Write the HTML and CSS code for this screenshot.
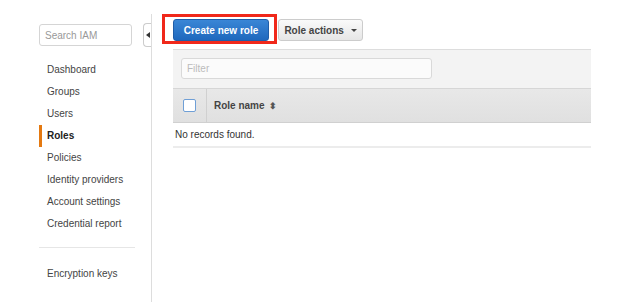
FILE: index.html
```html
<!DOCTYPE html>
<html lang="en">
<head>
    <meta charset="UTF-8">
    <title>IAM Roles</title>
    <link rel="stylesheet" href="styles.css">
</head>
<body>
    <div class="page">
        <div class="sidebar">
            <input type="text" class="search" placeholder="Search IAM">
            <div class="collapse-tab">
                <svg width="4" height="6" viewBox="0 0 4 6"><path d="M4 0 L0 3 L4 6 Z" fill="#333"/></svg>
            </div>
            <ul class="nav">
                <li>Dashboard</li>
                <li>Groups</li>
                <li>Users</li>
                <li class="active">Roles</li>
                <li>Policies</li>
                <li>Identity providers</li>
                <li>Account settings</li>
                <li>Credential report</li>
            </ul>
            <div class="nav-sep"></div>
            <ul class="nav nav-extra">
                <li>Encryption keys</li>
            </ul>
        </div>

        <div class="main">
            <div class="toolbar">
                <div class="highlight">
                    <button type="button" class="btn-primary">Create new role</button>
                </div>
                <button type="button" class="btn-default">Role actions <span class="caret"></span></button>
            </div>

            <div class="panel">
                <div class="filter-bar">
                    <input type="text" class="filter" placeholder="Filter">
                </div>
                <div class="table-head">
                    <div class="col-check"><span class="checkbox"></span></div>
                    <div class="col-name">Role name <span class="sort">&#x2B0D;</span></div>
                </div>
                <div class="table-empty">No records found.</div>
            </div>
        </div>
    </div>
</body>
</html>
```

FILE: styles.css
```css
body {
    margin: 0;
    font-family: "Liberation Sans", Arial, sans-serif;
    font-size: 10px;
    color: #333;
    background: #fff;
}
.page {
    display: flex;
    height: 303px;
}
.sidebar {
    position: relative;
    width: 112px;
    margin-top: 14px;
    padding: 10px 0 0 39px;
    border-right: 1px solid #ddd;
    height: 278px;
}
.search {
    display: block;
    box-sizing: border-box;
    width: 93px;
    height: 22px;
    padding: 0 5px;
    border: 1px solid #d5d5d5;
    border-radius: 3px;
    font-family: inherit;
    font-size: 10px;
}
.search::placeholder {
    color: #999;
}
.collapse-tab {
    position: absolute;
    left: 143px;
    top: 9px;
    width: 8px;
    height: 24px;
    box-sizing: border-box;
    border: 1px solid #ccc;
    border-right: none;
    border-radius: 4px 0 0 4px;
    background: #fff;
    display: flex;
    align-items: center;
    justify-content: center;
}
.nav {
    list-style: none;
    margin: 13px 0 0;
    padding: 0;
}
.nav-extra {
    margin-top: 15px;
}
.nav li {
    height: 22px;
    line-height: 22px;
    padding-left: 8px;
    color: #444;
}
.nav li.active {
    font-weight: bold;
    color: #222;
    border-left: 3px solid #e47911;
    padding-left: 5px;
}
.nav-sep {
    width: 96px;
    margin-top: 12px;
    border-top: 1px solid #e6e6e6;
}
.main {
    flex: 1;
    padding: 14px 0 0 10px;
}
.toolbar {
    display: flex;
    align-items: flex-start;
}
.highlight {
    border: 3px solid #f0281a;
    padding: 2px 5px 0 8px;
    height: 22px;
}
button {
    height: 22px;
    border-radius: 3px;
    font-family: inherit;
    font-size: 10px;
    font-weight: bold;
    white-space: nowrap;
    cursor: pointer;
}
.btn-primary {
    width: 96px;
    color: #fff;
    border: 1px solid #1f5da8;
    background: linear-gradient(#3a86d6, #1f68bd);
}
.btn-default {
    width: 85px;
    padding: 0;
    margin: 5px 0 0 1px;
    color: #444;
    border: 1px solid #ccc;
    background: linear-gradient(#fafafa, #e6e6e6);
}
.caret {
    display: inline-block;
    margin-left: 4px;
    vertical-align: middle;
    border-left: 3px solid transparent;
    border-right: 3px solid transparent;
    border-top: 3px solid #444;
}
.panel {
    width: 418px;
    margin: 5px 0 0 11px;
}
.filter-bar {
    height: 39px;
    border-top: 1px solid #ddd;
    background: #f3f3f3;
    padding: 8px 0 0 8px;
    box-sizing: border-box;
}
.filter {
    box-sizing: border-box;
    width: 251px;
    height: 21px;
    padding: 0 5px;
    border: 1px solid #d9d9d9;
    border-radius: 3px;
    background: #fbfbfb;
    font-family: inherit;
    font-size: 10px;
}
.filter::placeholder {
    color: #bbb;
}
.table-head {
    display: flex;
    height: 33px;
    border-top: 1px solid #d6d6d6;
    border-bottom: 1px solid #d0d0d0;
    background: linear-gradient(#e8e8e8, #e0e0e0);
}
.col-check {
    width: 33px;
    border-right: 1px solid #d0d0d0;
    display: flex;
    align-items: center;
    justify-content: center;
}
.checkbox {
    width: 11px;
    height: 11px;
    border: 1px solid #6f9fd6;
    border-radius: 2px;
    background: #fff;
}
.col-name {
    display: flex;
    align-items: center;
    padding-left: 7px;
    font-weight: bold;
    color: #444;
}
.sort {
    margin-left: 4px;
    font-size: 9px;
    color: #555;
}
.table-empty {
    height: 23px;
    line-height: 23px;
    padding-left: 2px;
    border-bottom: 2px solid #ececec;
    color: #333;
}
```
